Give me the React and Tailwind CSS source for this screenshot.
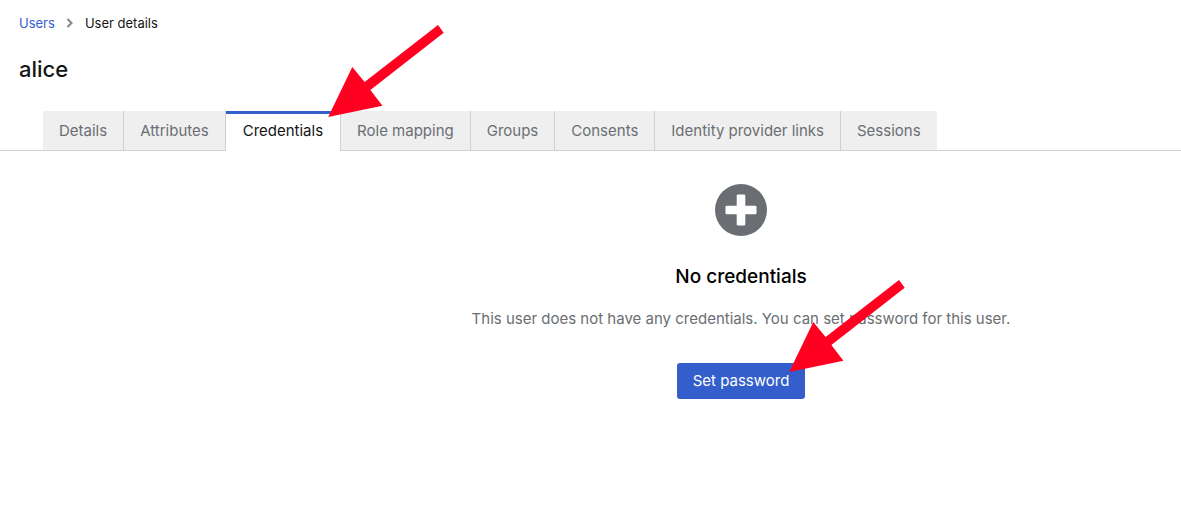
const tabs = [
  'Details',
  'Attributes',
  'Credentials',
  'Role mapping',
  'Groups',
  'Consents',
  'Identity provider links',
  'Sessions',
];

function Arrow({ className }) {
  return (
    <svg
      className={`pointer-events-none absolute z-10 h-[92px] w-[116px] ${className}`}
      viewBox="0 0 116 92"
      fill="#ff0020"
      aria-hidden="true"
    >
      <path d="M0.2 92 24.3 42 36.6 57 110 0 115.7 7.8 42.4 65 54.4 80.7Z" />
    </svg>
  );
}

function Breadcrumb() {
  return (
    <nav aria-label="Breadcrumb" className="px-[19px] pt-[13px] text-[13px] leading-5">
      <ol className="flex items-center">
        <li>
          <a href="#users" className="text-[#335ecc]">Users</a>
        </li>
        <li className="flex items-center">
          <svg className="mx-[11px] h-[10px] w-2" viewBox="0 0 8 10" fill="none" stroke="#86898c" strokeWidth="2.1" aria-hidden="true">
            <path d="M1.500 1 5.500 5 1.500 9" />
          </svg>
          <span aria-current="page">User details</span>
        </li>
      </ol>
    </nav>
  );
}

function Tabs() {
  return (
    <div role="tablist" className="flex border-b border-[#d0d0d0] pl-[43px]">
      {tabs.map((name, i) => {
        const active = name === 'Credentials';
        const divider = i < tabs.length - 1 ? 'border-r border-r-[#d0d0d0]' : '';
        return (
          <div key={name} className="relative flex">
            <button
              type="button"
              role="tab"
              aria-selected={active}
              className={`whitespace-nowrap ${divider} ${
                active
                  ? '-mb-px h-10 border-t-3 border-t-[#335ecc] bg-white px-[17px] pb-[2px] text-[#151515]'
                  : 'h-[39px] bg-[#efefef] px-4 pt-[2px] text-[#6a6e73]'
              }`}
            >
              {name}
            </button>
            {active && <Arrow className="-top-[86px] left-[102px]" />}
          </div>
        );
      })}
    </div>
  );
}

function EmptyState() {
  return (
    <section className="flex flex-col items-center pt-[33px] pl-[301px] text-center">
      <svg className="size-[52px]" viewBox="0 0 52 52" aria-hidden="true">
        <circle cx="26" cy="26" r="26" fill="#6a6e73" />
        <path
          d="M23 10.500h6a1.300 1.300 0 0 1 1.300 1.300v9.900h9.900a1.300 1.300 0 0 1 1.300 1.300v6a1.300 1.300 0 0 1-1.300 1.300h-9.900v9.900a1.300 1.300 0 0 1-1.300 1.300h-6a1.300 1.300 0 0 1-1.300-1.300v-9.900h-9.900a1.300 1.300 0 0 1-1.300-1.300v-6a1.300 1.300 0 0 1 1.300-1.300h9.900v-9.900a1.300 1.300 0 0 1 1.300-1.300z"
          fill="#fff"
        />
      </svg>
      <h2 className="mt-[25px] text-[19px] leading-8 font-medium text-black">No credentials</h2>
      <p className="mt-[14px] leading-6 text-[#6a6e73]">
        This user does not have any credentials. You can set password for this user.
      </p>
      <div className="relative mt-8">
        <button type="button" className="h-9 rounded-[3px] bg-[#335ecc] px-4 text-white">
          Set password
        </button>
        <Arrow className="-top-[83px] left-[112px]" />
      </div>
    </section>
  );
}

export default function App() {
  return (
    <main className="min-h-screen overflow-hidden bg-white font-['Inter','Liberation_Sans',sans-serif] text-[15px] text-[#151515]">
      <Breadcrumb />
      <h1 className="mt-5 mb-[26px] px-[19px] text-[22px] leading-8 font-medium">alice</h1>
      <Tabs />
      <EmptyState />
    </main>
  );
}
